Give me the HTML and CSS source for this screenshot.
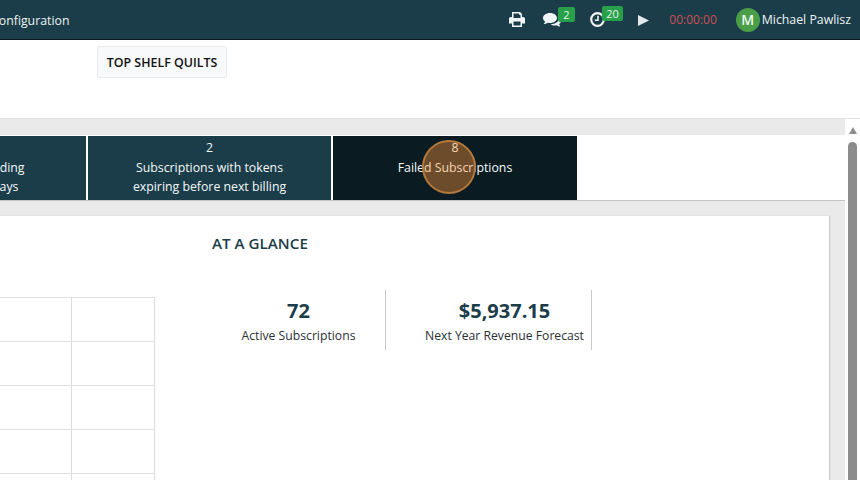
FILE: index.html
```html
<!DOCTYPE html>
<html lang="en">
<head>
    <meta charset="UTF-8">
    <title>Subscriptions</title>
    <link rel="stylesheet" href="styles.css">
</head>
<body>

<div class="topbar">
    <span class="nav-link">Configuration</span>
    <div class="tools">
        <svg class="icon icon-print" viewBox="0 0 16 15"><path fill="#f2f5f6" d="M3 0h8l2 2v3h1.2C15.2 5 16 5.8 16 6.8V11.500h-3V15H3v-3.500H0V6.800C0 5.800.8 5 1.800 5H3zM4.500 1.400V6h7V2.800H10V1.400zM4.500 9.500v4h7v-4z"/></svg>
        <span class="tool tool-chat">
            <svg class="icon" viewBox="0 0 18 14"><path fill="#f2f5f6" d="M7 0c3.900 0 7 2.200 7 5s-3.100 5-7 5c-.8 0-1.600-.1-2.300-.3C3.600 10.500 2.200 11 .8 11c.6-.6 1.100-1.500 1.300-2.400C.8 7.700 0 6.400 0 5c0-2.800 3.100-5 7-5z"/><path fill="#f2f5f6" d="M15.200 4.500C16.900 5.300 18 6.600 18 8c0 1.200-.7 2.300-1.900 3.100.2.900.6 1.900 1.200 2.500-1.300 0-2.700-.5-3.600-1.300-.6.200-1.300.2-1.900.2-1.700 0-3.200-.5-4.300-1.300 4.300.2 8.400-2.300 8.400-5.700 0-.3 0-.6-.7-1z"/></svg>
            <span class="badge">2</span>
        </span>
        <span class="tool tool-clock">
            <svg class="icon" viewBox="0 0 15 15"><circle cx="7.500" cy="7.500" r="6.300" fill="none" stroke="#f2f5f6" stroke-width="2.200"/><path fill="none" stroke="#f2f5f6" stroke-width="1.600" d="M8 3.800V8.200H4.800"/></svg>
            <span class="badge">20</span>
        </span>
        <svg class="icon icon-play" viewBox="0 0 11 11"><path fill="#e3e8ea" d="M0 0l11 5.500L0 11z"/></svg>
        <span class="timer">00:00:00</span>
        <span class="avatar">M</span>
        <span class="username">Michael Pawlisz</span>
    </div>
</div>

<div class="client-bar">
    <button class="client-btn">TOP SHELF QUILTS</button>
</div>

<div class="page">
    <div class="content">
        <div class="band"></div>
        <div class="tabs">
            <div class="tab"><div>5</div><div>Subscriptions ending</div><div>in the next 30 days</div></div>
            <div class="tab"><div>2</div><div>Subscriptions with tokens</div><div>expiring before next billing</div></div>
            <div class="tab tab-active">
                <div>8</div><div>Failed Subscriptions</div>
                <span class="click-mark"></span>
            </div>
        </div>
        <div class="panel">
            <div class="card">
                <h2>AT A GLANCE</h2>
                <div class="glance">
                    <div class="chart-grid">
                        <i></i><i></i><i></i><i></i><i></i><i></i><i></i><i></i><i></i><i></i>
                    </div>
                    <div class="stat">
                        <div class="stat-num">72</div>
                        <div class="stat-label">Active Subscriptions</div>
                    </div>
                    <div class="stat">
                        <div class="stat-num">$5,937.15</div>
                        <div class="stat-label">Next Year Revenue Forecast</div>
                    </div>
                </div>
            </div>
        </div>
    </div>
    <div class="scrollbar">
        <div class="scroll-arrow"></div>
        <div class="scroll-thumb"></div>
    </div>
</div>

</body>
</html>
```

FILE: styles.css
```css
html, body {
    height: 100%;
}

body {
    margin: 0;
    font-family: "Open Sans", "Noto Sans", Arial, sans-serif;
    font-size: 12.2px;
    background-color: #fff;
    overflow: hidden;
    display: flex;
    flex-direction: column;
}

.topbar {
    height: 39px;
    flex-shrink: 0;
    background-color: #1a3d49;
    border-bottom: 1px solid #08181e;
    color: #eef3f4;
    display: flex;
    align-items: center;
    padding-right: 9px;
}

.nav-link {
    margin-left: -9px;
    font-size: 12.3px;
    margin-top: 1px;
}

.tools {
    margin-left: auto;
    display: flex;
    align-items: center;
}

.icon {
    display: block;
}

.icon-print {
    width: 16px;
    height: 15px;
}

.tool {
    position: relative;
    display: block;
}

.tool-chat {
    width: 18px;
    height: 14px;
    margin-left: 18px;
    margin-top: 1px;
}

.tool-clock {
    width: 15px;
    height: 15px;
    margin-left: 29px;
}

.tool .icon {
    width: 100%;
    height: 100%;
}

.badge {
    position: absolute;
    top: -6px;
    left: 15px;
    background-color: #28a04a;
    color: #e9f5ec;
    font-size: 11px;
    line-height: 15px;
    padding: 0 5px;
    border-radius: 2px;
}

.tool-clock .badge {
    left: 12px;
    top: -6px;
    padding: 0 4px;
}

.icon-play {
    width: 11px;
    height: 11px;
    margin-left: 33px;
    margin-top: 1px;
}

.timer {
    margin-left: 20px;
    color: #cc5055;
    font-size: 12px;
}

.avatar {
    width: 24px;
    height: 24px;
    margin-left: 19px;
    border-radius: 50%;
    background-color: #4a9e48;
    color: #f1f8f0;
    font-size: 14px;
    font-weight: 600;
    line-height: 24px;
    text-align: center;
}

.username {
    margin-left: 2px;
    font-size: 12.300px;
}

.client-bar {
    height: 79px;
    flex-shrink: 0;
    padding: 6px 0 0 97px;
    box-sizing: border-box;
    border-bottom: 1px solid #e2e2e2;
}

.client-btn {
    height: 32px;
    width: 130px;
    padding: 0;
    background-color: #f8f9fa;
    border: 1px solid #e9ecef;
    border-radius: 2px;
    font-family: inherit;
    font-size: 12.400px;
    font-weight: 600;
    color: #111;
}

.page {
    flex: 1;
    display: flex;
    min-height: 0;
}

.content {
    width: 845px;
    display: flex;
    flex-direction: column;
}

.band {
    height: 16px;
    background-color: #eaeaea;
}

.tabs {
    display: flex;
    gap: 2px;
    margin-left: -157px;
    padding-top: 1px;
    border-bottom: 1px solid #c4c4c4;
    background-color: #fff;
}

.tab {
    position: relative;
    width: 243px;
    height: 64px;
    box-sizing: border-box;
    padding-top: 2px;
    background-color: #1a3d49;
    color: #f6f9fa;
    text-align: center;
    font-size: 12.300px;
    line-height: 19.500px;
}

.tab-active {
    width: 244px;
    background-color: #0a1c21;
}

.click-mark {
    position: absolute;
    left: 89px;
    top: 4px;
    width: 50px;
    height: 50px;
    border: 2px solid #b5783a;
    border-radius: 50%;
    background-color: rgba(255, 150, 60, 0.4);
}

.panel {
    flex: 1;
    background-color: #eaeaea;
    padding: 15px 16px 0 0;
    min-height: 0;
}

.card {
    height: 100%;
    background-color: #fff;
    box-shadow: 1px 0 1px #c8c8c8;
    padding-top: 17px;
    box-sizing: border-box;
}

h2 {
    margin: 0 0 37px 212px;
    font-size: 15.200px;
    line-height: 20px;
    font-weight: 600;
    color: #1a3d49;
}

.glance {
    display: flex;
    align-items: flex-start;
}

.chart-grid {
    display: grid;
    grid-template-columns: 83px 83px;
    grid-auto-rows: 44px;
    margin: 7px 57px 0 -11px;
    flex-shrink: 0;
}

.chart-grid i {
    border-top: 1px solid #e0e0e0;
    border-right: 1px solid #dcdcdc;
}

.stat {
    width: 174px;
    height: 60px;
    margin-right: 32px;
    padding-top: 8px;
    box-sizing: border-box;
    border-right: 1px solid #c8c8c8;
    text-align: center;
    flex-shrink: 0;
}

.stat-num {
    font-size: 20px;
    font-weight: 700;
    line-height: 26px;
    color: #1a3d49;
}

.stat-label {
    margin-top: 2px;
    font-size: 12.200px;
    line-height: 20px;
    color: #2b3033;
}

.scrollbar {
    width: 15px;
    display: flex;
    flex-direction: column;
    align-items: center;
}

.scroll-arrow {
    margin-top: 8px;
    width: 0;
    height: 0;
    border-left: 4.500px solid transparent;
    border-right: 4.500px solid transparent;
    border-bottom: 7px solid #8c8c8c;
}

.scroll-thumb {
    flex: 1;
    width: 9px;
    margin-top: 8px;
    border-radius: 5px 5px 0 0;
    background-color: #8c8c8c;
}
```
